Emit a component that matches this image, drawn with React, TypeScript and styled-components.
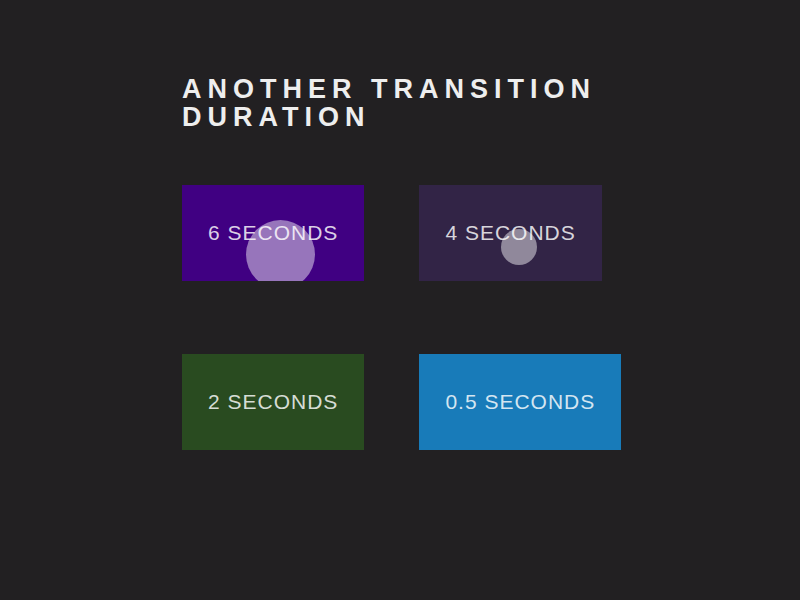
import React from "react";
import styled, { createGlobalStyle } from "styled-components";

const GlobalStyle = createGlobalStyle`
  *, *::before, *::after { box-sizing: border-box; }
  body {
    margin: 0;
    background: #222022;
    color: #eee;
    font-family: "Liberation Sans", Arial, sans-serif;
  }
`;

const Page = styled.main`
  min-height: 100vh;
  display: flex;
  justify-content: center;
  padding: 75px 24px;
`;

const Content = styled.div`
  width: 100%;
  max-width: 436px;
`;

const Title = styled.h1`
  margin: 0 0 54px;
  font-size: 27px;
  line-height: 28px;
  font-weight: 700;
  letter-spacing: 6px;
  text-transform: uppercase;
`;

const ButtonGrid = styled.div`
  display: grid;
  grid-template-columns: max-content max-content;
  justify-items: start;
  gap: 73px 55px;
`;

const RippleButton = styled.button<{ $color: string }>`
  position: relative;
  overflow: hidden;
  border: 0;
  padding: 36px 26px;
  background: ${({ $color }) => $color};
  color: rgba(255, 255, 255, 0.82);
  font-family: inherit;
  font-size: 21px;
  line-height: 24px;
  letter-spacing: 1px;
  text-transform: uppercase;
  white-space: nowrap;
  cursor: pointer;
`;

const Ripple = styled.span<{ $x: number; $y: number; $size: number }>`
  position: absolute;
  left: ${({ $x }) => $x}px;
  top: ${({ $y }) => $y}px;
  width: ${({ $size }) => $size}px;
  height: ${({ $size }) => $size}px;
  border-radius: 50%;
  background: rgba(255, 255, 255, 0.46);
  pointer-events: none;
`;

const buttons = [
  { label: "6 seconds", color: "#400082", ripple: { x: 64, y: 35, size: 69 } },
  { label: "4 seconds", color: "#322446", ripple: { x: 82, y: 44, size: 36 } },
  { label: "2 seconds", color: "#294b20" },
  { label: "0.5 seconds", color: "#187bb9" },
];

export default function App() {
  return (
    <>
      <GlobalStyle />
      <Page>
        <Content>
          <Title>Another transition duration</Title>
          <ButtonGrid>
            {buttons.map(({ label, color, ripple }) => (
              <RippleButton key={label} type="button" $color={color}>
                {label}
                {ripple && <Ripple $x={ripple.x} $y={ripple.y} $size={ripple.size} />}
              </RippleButton>
            ))}
          </ButtonGrid>
        </Content>
      </Page>
    </>
  );
}
